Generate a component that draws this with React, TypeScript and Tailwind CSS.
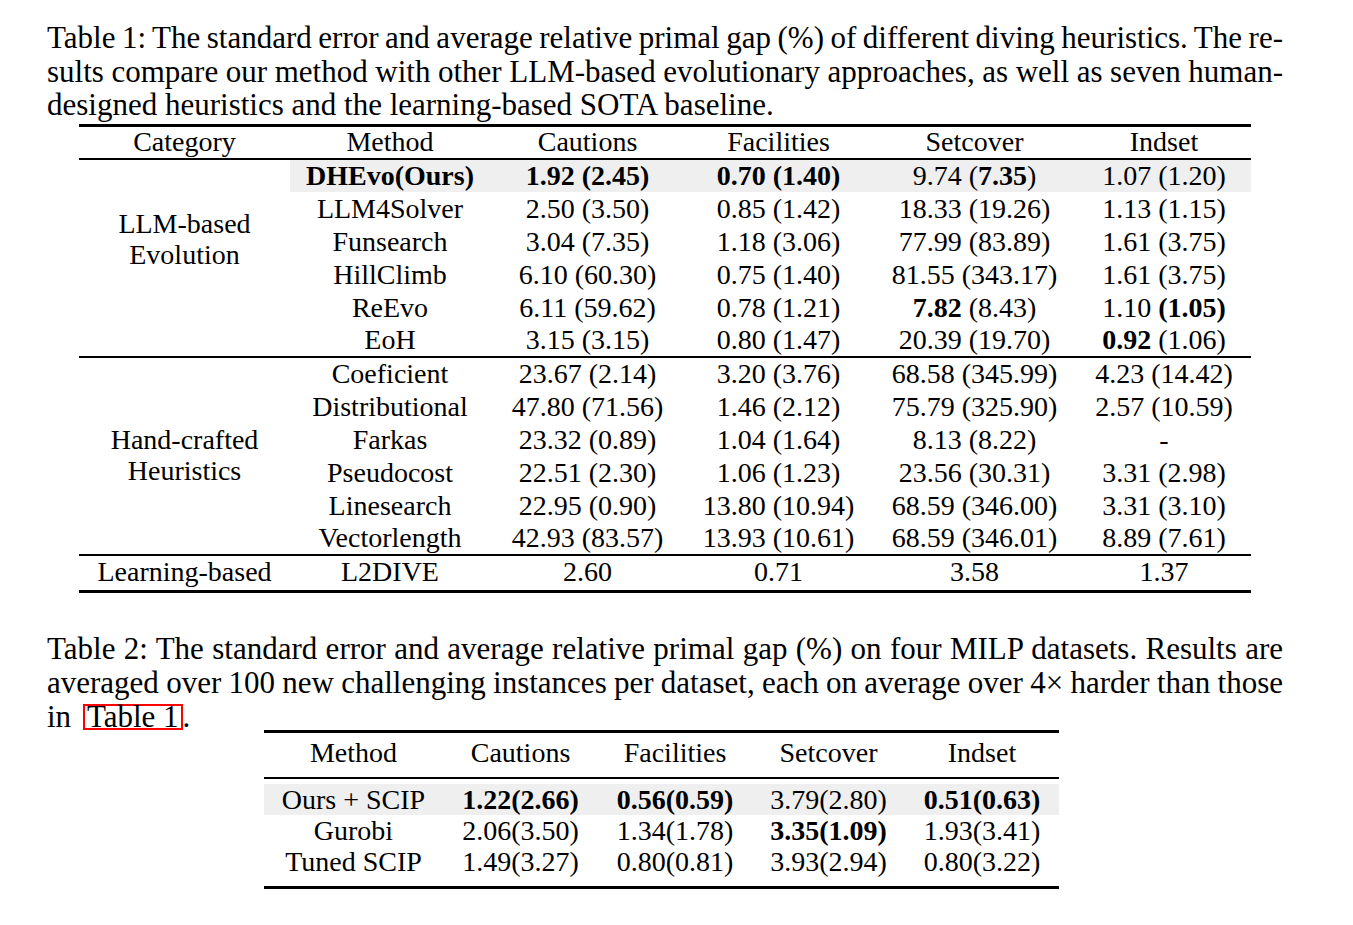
import React from 'react';

type Row = {
  method: React.ReactNode;
  values: React.ReactNode[];
  shaded?: boolean;
};

const B = ({ children }: { children: React.ReactNode }) => <span className="font-bold">{children}</span>;

const llmRows: Row[] = [
  {
    method: <B>DHEvo(Ours)</B>,
    values: [<B>1.92 (2.45)</B>, <B>0.70 (1.40)</B>, <>9.74 (<B>7.35</B>)</>, '1.07 (1.20)'],
    shaded: true,
  },
  { method: 'LLM4Solver', values: ['2.50 (3.50)', '0.85 (1.42)', '18.33 (19.26)', '1.13 (1.15)'] },
  { method: 'Funsearch', values: ['3.04 (7.35)', '1.18 (3.06)', '77.99 (83.89)', '1.61 (3.75)'] },
  { method: 'HillClimb', values: ['6.10 (60.30)', '0.75 (1.40)', '81.55 (343.17)', '1.61 (3.75)'] },
  { method: 'ReEvo', values: ['6.11 (59.62)', '0.78 (1.21)', <><B>7.82</B> (8.43)</>, <>1.10 <B>(1.05)</B></>] },
  { method: 'EoH', values: ['3.15 (3.15)', '0.80 (1.47)', '20.39 (19.70)', <><B>0.92</B> (1.06)</>] },
];

const handRows: Row[] = [
  { method: 'Coeficient', values: ['23.67 (2.14)', '3.20 (3.76)', '68.58 (345.99)', '4.23 (14.42)'] },
  { method: 'Distributional', values: ['47.80 (71.56)', '1.46 (2.12)', '75.79 (325.90)', '2.57 (10.59)'] },
  { method: 'Farkas', values: ['23.32 (0.89)', '1.04 (1.64)', '8.13 (8.22)', '-'] },
  { method: 'Pseudocost', values: ['22.51 (2.30)', '1.06 (1.23)', '23.56 (30.31)', '3.31 (2.98)'] },
  { method: 'Linesearch', values: ['22.95 (0.90)', '13.80 (10.94)', '68.59 (346.00)', '3.31 (3.10)'] },
  { method: 'Vectorlength', values: ['42.93 (83.57)', '13.93 (10.61)', '68.59 (346.01)', '8.89 (7.61)'] },
];

const solverRows: Row[] = [
  {
    method: 'Ours + SCIP',
    values: [<B>1.22(2.66)</B>, <B>0.56(0.59)</B>, '3.79(2.80)', <B>0.51(0.63)</B>],
    shaded: true,
  },
  { method: 'Gurobi', values: ['2.06(3.50)', '1.34(1.78)', <B>3.35(1.09)</B>, '1.93(3.41)'] },
  { method: 'Tuned SCIP', values: ['1.49(3.27)', '0.80(0.81)', '3.93(2.94)', '0.80(3.22)'] },
];

const datasets = ['Cautions', 'Facilities', 'Setcover', 'Indset'];

const GroupRows = ({ label, rows, first }: { label: React.ReactNode; rows: Row[]; first?: boolean }) => (
  <>
    {rows.map((row, i) => {
      const top = i === 0 && !first ? 'border-t-2 border-black' : '';
      const bg = row.shaded ? 'bg-[#efefef]' : '';
      return (
        <tr key={i} className="h-[33px]">
          {i === 0 && (
            <td rowSpan={rows.length} className={`align-middle text-center leading-[31px] ${top} ${first ? 'pb-[38px]' : 'pb-[2px]'}`}>
              {label}
            </td>
          )}
          <td className={`text-center leading-none ${top} ${bg}`}>{row.method}</td>
          {row.values.map((v, j) => (
            <td key={j} className={`text-center leading-none ${top} ${bg}`}>
              {v}
            </td>
          ))}
        </tr>
      );
    })}
  </>
);

// caption lines are set one per block, stretched like LaTeX justified text
const Caption = ({ lines, leading }: { lines: React.ReactNode[]; leading: string }) => (
  <div className={`w-[1236px] text-[31px] ${leading}`}>
    {lines.map((line, i) => (
      <div
        key={i}
        className={
          i < lines.length - 1
            ? 'text-justify [text-align-last:justify] [word-spacing:-2px] whitespace-nowrap'
            : 'whitespace-nowrap'
        }
      >
        {line}
      </div>
    ))}
  </div>
);

export default function App() {
  return (
    <div className="min-h-[925px] w-[1353px] bg-white text-black pl-[47px] pt-[21px] font-['Liberation_Serif','Times_New_Roman',serif]">
      <Caption
        leading="leading-[33.5px]"
        lines={[
          'Table 1: The standard error and average relative primal gap (%) of different diving heuristics. The re-',
          'sults compare our method with other LLM-based evolutionary approaches, as well as seven human-',
          'designed heuristics and the learning-based SOTA baseline.',
        ]}
      />

      <table className="mt-[2px] ml-[32px] w-[1172px] table-fixed border-collapse text-[28px]">
        <colgroup>
          <col className="w-[211px]" />
          <col className="w-[200px]" />
          <col className="w-[195px]" />
          <col className="w-[187px]" />
          <col className="w-[205px]" />
          <col className="w-[174px]" />
        </colgroup>
        <thead>
          <tr className="h-[34px] border-t-[3px] border-b-2 border-black">
            <th className="font-normal text-center leading-none">Category</th>
            <th className="font-normal text-center leading-none">Method</th>
            {datasets.map((d) => (
              <th key={d} className="font-normal text-center leading-none">
                {d}
              </th>
            ))}
          </tr>
        </thead>
        <tbody>
          <GroupRows
            first
            label={
              <>
                LLM-based
                <br />
                Evolution
              </>
            }
            rows={llmRows}
          />
          <GroupRows
            label={
              <>
                Hand-crafted
                <br />
                Heuristics
              </>
            }
            rows={handRows}
          />
          <tr className="h-[36px] border-t-2 border-b-[3px] border-black">
            <td className="pb-[1px] text-center leading-none">Learning-based</td>
            <td className="pb-[1px] text-center leading-none">L2DIVE</td>
            <td className="pb-[1px] text-center leading-none">2.60</td>
            <td className="pb-[1px] text-center leading-none">0.71</td>
            <td className="pb-[1px] text-center leading-none">3.58</td>
            <td className="pb-[1px] text-center leading-none">1.37</td>
          </tr>
        </tbody>
      </table>

      <div className="mt-[39px]">
        <Caption
          leading="leading-[34px]"
          lines={[
            'Table 2: The standard error and average relative primal gap (%) on four MILP datasets. Results are',
            'averaged over 100 new challenging instances per dataset, each on average over 4× harder than those',
            <>
              in{' '}
              <span className="ml-[4px] inline-block h-[26px] border-2 border-[#ff0000] px-[2px] leading-[22px]">
                Table 1
              </span>
              .
            </>,
          ]}
        />
      </div>

      <table className="-mt-[4px] ml-[217px] w-[795px] table-fixed border-collapse text-[28px]">
        <colgroup>
          <col className="w-[179px]" />
          <col className="w-[155px]" />
          <col className="w-[154px]" />
          <col className="w-[153px]" />
          <col className="w-[154px]" />
        </colgroup>
        <thead>
          <tr className="h-[47px] border-t-[3px] border-b-2 border-black">
            <th className="pb-[4px] font-normal text-center leading-none">Method</th>
            {datasets.map((d) => (
              <th key={d} className="pb-[4px] font-normal text-center leading-none">
                {d}
              </th>
            ))}
          </tr>
        </thead>
        <tbody>
          <tr className="h-[6px]">
            <td colSpan={5} />
          </tr>
          {solverRows.map((row, i) => (
            <tr key={i} className={`h-[31px] ${row.shaded ? 'bg-[#efefef]' : ''}`}>
              <td className="text-center leading-none">{row.method}</td>
              {row.values.map((v, j) => (
                <td key={j} className="text-center leading-none">
                  {v}
                </td>
              ))}
            </tr>
          ))}
          <tr className="h-[10px] border-b-[3px] border-black">
            <td colSpan={5} />
          </tr>
        </tbody>
      </table>
    </div>
  );
}
